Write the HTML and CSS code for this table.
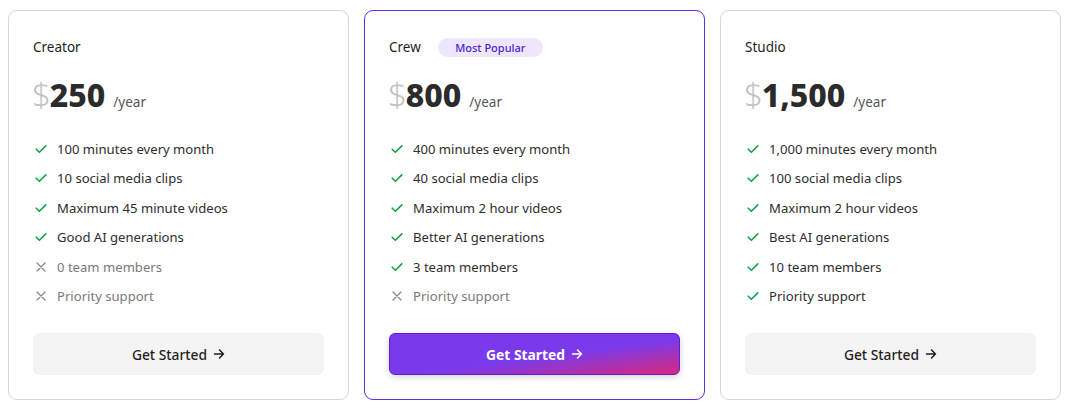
FILE: index.html
```html
<!DOCTYPE html>
<html>
<head>
<meta charset="utf-8">
<link rel="stylesheet" href="styles.css">
</head>
<body>
<div class="plans">
  <div class="card">
    <div class="title-row"><span class="title">Creator</span></div>
    <div class="price"><span class="dollar">$</span><span class="amount">250</span><span class="per">/year</span></div>
    <ul class="features">
      <li class="yes"><svg viewBox="0 0 12 12"><path d="M1.2 6.2 L4.4 9.3 L10.8 2.9"/></svg>100 minutes every month</li>
      <li class="yes"><svg viewBox="0 0 12 12"><path d="M1.2 6.2 L4.4 9.3 L10.8 2.9"/></svg>10 social media clips</li>
      <li class="yes"><svg viewBox="0 0 12 12"><path d="M1.2 6.2 L4.4 9.3 L10.8 2.9"/></svg>Maximum 45 minute videos</li>
      <li class="yes"><svg viewBox="0 0 12 12"><path d="M1.2 6.2 L4.4 9.3 L10.8 2.9"/></svg>Good AI generations</li>
      <li class="no"><svg viewBox="0 0 12 12"><path d="M2 2 L10 10 M10 2 L2 10"/></svg>0 team members</li>
      <li class="no"><svg viewBox="0 0 12 12"><path d="M2 2 L10 10 M10 2 L2 10"/></svg>Priority support</li>
    </ul>
    <button class="btn">Get Started <svg class="arrow" viewBox="0 0 12 12"><path d="M1.5 6 H10.5 M6.5 2 L10.5 6 L6.5 10"/></svg></button>
  </div>
  <div class="card popular">
    <div class="title-row"><span class="title">Crew</span><span class="badge">Most Popular</span></div>
    <div class="price"><span class="dollar">$</span><span class="amount">800</span><span class="per">/year</span></div>
    <ul class="features">
      <li class="yes"><svg viewBox="0 0 12 12"><path d="M1.2 6.2 L4.4 9.3 L10.8 2.9"/></svg>400 minutes every month</li>
      <li class="yes"><svg viewBox="0 0 12 12"><path d="M1.2 6.2 L4.4 9.3 L10.8 2.9"/></svg>40 social media clips</li>
      <li class="yes"><svg viewBox="0 0 12 12"><path d="M1.2 6.2 L4.4 9.3 L10.8 2.9"/></svg>Maximum 2 hour videos</li>
      <li class="yes"><svg viewBox="0 0 12 12"><path d="M1.2 6.2 L4.4 9.3 L10.8 2.9"/></svg>Better AI generations</li>
      <li class="yes"><svg viewBox="0 0 12 12"><path d="M1.2 6.2 L4.4 9.3 L10.8 2.9"/></svg>3 team members</li>
      <li class="no"><svg viewBox="0 0 12 12"><path d="M2 2 L10 10 M10 2 L2 10"/></svg>Priority support</li>
    </ul>
    <button class="btn primary">Get Started <svg class="arrow" viewBox="0 0 12 12"><path d="M1.5 6 H10.5 M6.5 2 L10.5 6 L6.5 10"/></svg></button>
  </div>
  <div class="card">
    <div class="title-row"><span class="title">Studio</span></div>
    <div class="price"><span class="dollar">$</span><span class="amount">1,500</span><span class="per">/year</span></div>
    <ul class="features">
      <li class="yes"><svg viewBox="0 0 12 12"><path d="M1.2 6.2 L4.4 9.3 L10.8 2.9"/></svg>1,000 minutes every month</li>
      <li class="yes"><svg viewBox="0 0 12 12"><path d="M1.2 6.2 L4.4 9.3 L10.8 2.9"/></svg>100 social media clips</li>
      <li class="yes"><svg viewBox="0 0 12 12"><path d="M1.2 6.2 L4.4 9.3 L10.8 2.9"/></svg>Maximum 2 hour videos</li>
      <li class="yes"><svg viewBox="0 0 12 12"><path d="M1.2 6.2 L4.4 9.3 L10.8 2.9"/></svg>Best AI generations</li>
      <li class="yes"><svg viewBox="0 0 12 12"><path d="M1.2 6.2 L4.4 9.3 L10.8 2.9"/></svg>10 team members</li>
      <li class="yes"><svg viewBox="0 0 12 12"><path d="M1.2 6.2 L4.4 9.3 L10.8 2.9"/></svg>Priority support</li>
    </ul>
    <button class="btn">Get Started <svg class="arrow" viewBox="0 0 12 12"><path d="M1.5 6 H10.5 M6.5 2 L10.5 6 L6.5 10"/></svg></button>
  </div>
</div>
</body>
</html>
```
FILE: styles.css
```css
* { box-sizing: border-box; }
html, body { background: #ffffff; }
body {
  margin: 10px 8px;
  font-family: "Noto Sans", "Open Sans", sans-serif;
  color: #222;
}
.plans {
  display: grid;
  grid-template-columns: repeat(3, 341px);
  gap: 15px;
}
.card {
  border: 1px solid #d6d6d6;
  border-radius: 9px;
  padding: 26px 24px 24px 24px;
  display: flex;
  flex-direction: column;
  height: 390px;
}
.card.popular {
  border: 1.5px solid #5b30e6;
}
.title-row {
  display: flex;
  align-items: center;
  gap: 17px;
  height: 20px;
}
.title {
  font-size: 13.5px;
  color: #1f1f1f;
}
.badge {
  background: #ede6fd;
  color: #4c1fd0;
  font-size: 11px;
  font-weight: 500;
  border-radius: 10px;
  height: 19px;
  line-height: 19px;
  width: 105px;
  text-align: center;
}
.price {
  margin-top: 18px;
  height: 40px;
  display: flex;
  align-items: baseline;
}
.dollar {
  font-size: 33px;
  font-weight: 300;
  color: #c2c2c2;
  line-height: 40px;
  margin-left: -1px;
}
.amount {
  font-size: 32px;
  font-weight: 800;
  color: #2b2b2b;
  line-height: 40px;
  margin-left: -1px;
}
.per {
  font-size: 13.5px;
  color: #555;
  margin-left: 8px;
}
.features {
  list-style: none;
  margin: 19px 0 0 0;
  padding: 0;
}
.features li {
  display: flex;
  align-items: center;
  height: 29.5px;
  font-size: 13.1px;
  color: #2e2e2e;
}
.features li.no { color: #7a7a7a; }
.features svg {
  width: 12px;
  height: 12px;
  margin-left: 2px;
  margin-right: 10px;
  fill: none;
  stroke-width: 1.6;
  stroke-linecap: round;
  stroke-linejoin: round;
  flex: none;
}
.features li.yes svg { stroke: #16a34a; }
.features li.no svg { stroke: #8a8a8a; stroke-width: 1.3; }
.btn {
  margin-top: 22px;
  height: 42px;
  width: 100%;
  border: none;
  border-radius: 6px;
  background: #f4f4f4;
  font-family: "Noto Sans", "Open Sans", sans-serif;
  font-size: 13.8px;
  font-weight: 500;
  color: #1f1f1f;
  cursor: pointer;
  display: flex;
  align-items: center;
  justify-content: center;
  gap: 6px;
}
.btn .arrow {
  width: 12px;
  height: 12px;
  fill: none;
  stroke: currentColor;
  stroke-width: 1.5;
  stroke-linecap: round;
  stroke-linejoin: round;
}
.btn.primary {
  background: linear-gradient(to bottom right, #7a3aec 55%, #d8287a 100%);
  border: 1px solid #5a1fd4;
  color: #ffffff;
  font-weight: 700;
  box-shadow: 0 2px 6px rgba(0,0,0,0.18);
}
```
